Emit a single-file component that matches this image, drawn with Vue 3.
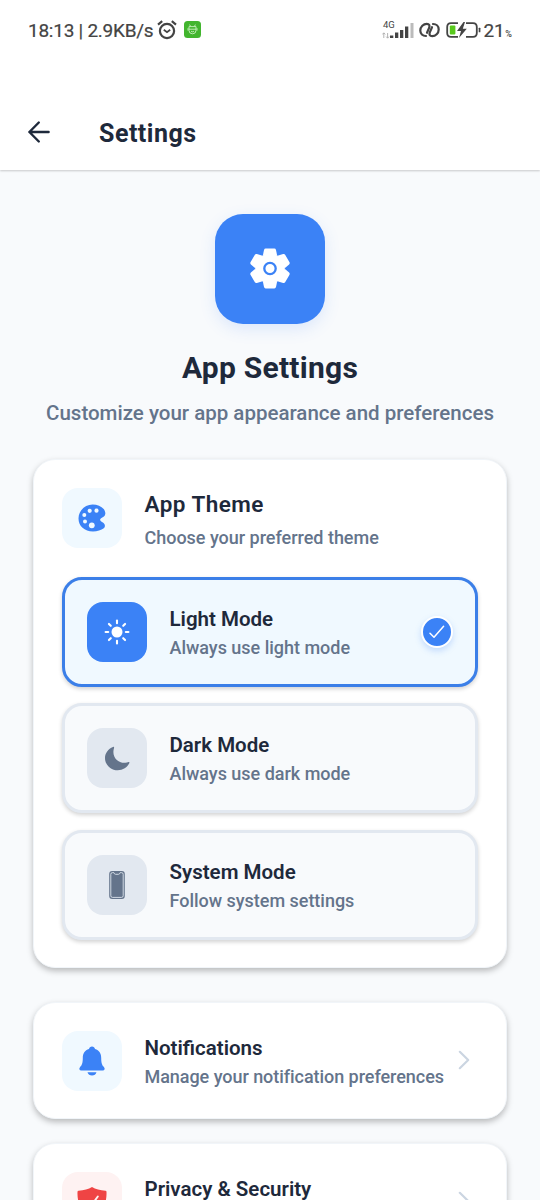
<script setup>
const modes = [
  { id: 'light', title: 'Light Mode', text: 'Always use light mode', active: true },
  { id: 'dark', title: 'Dark Mode', text: 'Always use dark mode', active: false },
  { id: 'system', title: 'System Mode', text: 'Follow system settings', active: false },
]
const rays = [0, 45, 90, 135, 180, 225, 270, 315]
const teeth = [0, 60, 120, 180, 240, 300]
const links = [
  { id: 'bell', title: 'Notifications', text: 'Manage your notification preferences' },
  { id: 'shield', title: 'Privacy & Security', text: '' },
]
</script>

<template>
  <div class="screen">
    <header class="top">
      <div class="status">
        <span class="clock">18:13 | 2.9KB/s</span>
        <svg class="alarm" width="20" height="20" viewBox="0 0 20 20" fill="none" stroke="#444" stroke-width="2.2">
          <circle cx="10" cy="11" r="7.1" />
          <path d="M1 4.6 5.2 1.2M19 4.6 14.8 1.2" />
          <path d="M6.8 9.8 10 12.2 13.2 9.8" stroke-width="1.8" />
        </svg>
        <svg class="robot" width="17" height="17" viewBox="0 0 17 17">
          <rect width="17" height="17" rx="3.5" fill="#42b52e" />
          <g fill="none" stroke="#c9f0bf" stroke-width=".9">
            <path d="M5.6 3.6 6.6 5.4M11.4 3.6 10.4 5.4M4 7.2V9.6M13 7.2V9.6" />
            <path d="M5 5.6H12V9.4Q12 12.8 8.5 12.8T5 9.4ZM5 8.2H12M7 10.2Q8.5 11.4 10 10.2" />
          </g>
        </svg>
        <div class="status-right">
          <svg class="signal" width="33" height="22" viewBox="0 0 33 22">
            <text x="1" y="8.6" class="net">4G</text>
            <path d="M1.8 19V14M.4 15.4 1.8 13.8 3.2 15.4M5.6 14V19M4.2 17.6 5.6 19.2 7 17.6" fill="none" stroke="#aaa" stroke-width=".9" />
            <path d="M8 16.500h3.300v2.500H8zM13 13.500h3.300V19H13zM18 11h3.300v8H18zM23 7.500h3.300V19H23z" fill="#444" />
            <path d="M28.500 4h3v15h-3z" fill="#bbb" />
          </svg>
          <svg class="link" width="21" height="16" viewBox="0 0 21 16" fill="none" stroke="#444" stroke-width="2.200" stroke-linecap="round">
            <path d="M7 14C3.600 14 1.300 11.800 1.300 8.600 1.300 4.700 4.500 1.800 7.800 1.800 10.400 1.800 11 3.600 10.100 5.800L8 10.800" />
            <path d="M14 2C17.400 2 19.700 4.200 19.700 7.400 19.700 11.300 16.500 14.200 13.200 14.200 10.600 14.200 10 12.400 10.900 10.200L13 5.200" />
          </svg>
          <svg class="battery" width="35" height="16" viewBox="0 0 35 16">
            <path d="M12 1.200H5Q1.200 1.200 1.200 5V11Q1.200 14.800 5 14.800H12M20 1.200H27Q30.800 1.200 30.800 5V11Q30.800 14.800 27 14.800H20" fill="none" stroke="#444" stroke-width="1.800" />
            <rect x="3.800" y="3.600" width="5.600" height="8.800" rx="1" fill="#58c91c" />
            <path d="M17.500 0 11 9H15L13 16 20.800 6.800H16.800L19 0Z" fill="#444" />
            <rect x="32.700" y="5.700" width="1.700" height="4.600" rx=".5" fill="#444" />
          </svg>
          <span class="level">21</span><span class="pct">%</span>
        </div>
      </div>
      <div class="bar">
        <svg width="24" height="24" viewBox="0 0 24 24" fill="none" stroke="#1e293b" stroke-width="2.400" stroke-linecap="round" stroke-linejoin="round">
          <path d="M11.800 2.500 2.400 12 11.800 21.500M2.400 12H21.600" />
        </svg>
        <h1>Settings</h1>
      </div>
    </header>

    <section class="hero">
      <div class="hero-icon">
        <svg width="44" height="44" viewBox="-22 -21.500 44 44">
          <g fill="#fff">
            <circle r="14.800" />
            <path v-for="a in teeth" :key="a" :transform="`rotate(${a})`" d="M-7.200-12.800-6-18.600Q-5.600-20-4.400-20H4.400Q5.600-20 6-18.600L7.200-12.800Z" />
          </g>
          <circle r="5.700" fill="#fff" stroke="#3b82f6" stroke-width="2.300" />
        </svg>
      </div>
      <h2>App Settings</h2>
      <p>Customize your app appearance and preferences</p>
    </section>

    <section class="card theme">
      <div class="row theme-head">
        <div class="tile">
          <svg width="30" height="30" viewBox="0 0 30 30">
            <path d="M15.600 1.500C7.600 1.500 1.500 8 1.500 15.500S7.500 28.400 16 28.400c4.200 0 8.300-1.200 10.800-3.200 1.200-1 1.400-2.500.7-4-.7-1.400-2.300-2-3.500-2.900-1.200-1-1.200-2.400.1-3.100 1.400-.7 3.800-1.500 4.200-4.100.2-1.600-.4-3.400-1.600-5C24.300 3.200 20.300 1.500 15.600 1.500Z" fill="#3b82f6" />
            <g fill="#f0f9ff">
              <circle cx="7.300" cy="12" r="2" /><circle cx="12.700" cy="7.800" r="2.100" /><circle cx="19.500" cy="7.700" r="2.100" />
              <circle cx="8" cy="18.500" r="2" /><circle cx="14.800" cy="22.300" r="2.900" />
            </g>
          </svg>
        </div>
        <div class="copy">
          <h3>App Theme</h3>
          <p>Choose your preferred theme</p>
        </div>
      </div>
      <div class="modes">
        <div v-for="m in modes" :key="m.id" class="mode" :class="{ active: m.active }">
          <div class="tile">
            <svg v-if="m.id === 'light'" width="26" height="26" viewBox="-13 -13 26 26">
              <circle r="5.500" fill="#fff" />
              <path v-for="a in rays" :key="a" :transform="`rotate(${a})`" d="M0-8.800V-11.400" stroke="#fff" stroke-width="2.100" stroke-linecap="round" />
            </svg>
            <svg v-else-if="m.id === 'dark'" width="26" height="26" viewBox="0 0 26 26">
              <path d="M9 2c.6-.5 1.300-.1 1.100.7-2.800 8.300 3 15.600 11.300 15.100 1.200-.1 2-.4 3.100-.7.8-.2 1.200.4.9 1C23.300 22.500 18.900 25.300 13.700 25.300 6.700 25.300 1 19.800 1 12.900 1 8.200 4.200 3.900 9 2Z" fill="#64748b" />
            </svg>
            <svg v-else width="28" height="28" viewBox="0 0 28 28">
              <rect x="6.200" y="0" width="15.600" height="28" rx="3" fill="#64748b" />
              <path d="M9.500 1.600H10.800Q11.300 3.300 12.600 3.300H15.400Q16.700 3.300 17.200 1.600H18.500Q20.200 1.600 20.200 3.300V24.700Q20.200 26.400 18.500 26.400H9.500Q7.800 26.400 7.800 24.700V3.300Q7.800 1.600 9.500 1.600Z" fill="none" stroke="#dce4ed" stroke-width=".9" />
            </svg>
          </div>
          <div class="copy">
            <h4>{{ m.title }}</h4>
            <p>{{ m.text }}</p>
          </div>
          <div v-if="m.active" class="check">
            <svg width="18" height="16" viewBox="0 0 18 16" fill="none" stroke="#fff" stroke-width="1.500" stroke-linecap="round" stroke-linejoin="round">
              <path d="M2 9.200 6 13.200 15.600 2.200" />
            </svg>
          </div>
        </div>
      </div>
    </section>

    <section v-for="l in links" :key="l.id" class="card row item">
      <div class="tile" :class="{ red: l.id === 'shield' }">
        <svg v-if="l.id === 'bell'" width="30" height="30" viewBox="0 0 30 30" fill="#3b82f6">
          <path d="M15 .6c-1.600 0-2.700 1.100-3 2.300C7.800 4 5.800 7.600 5.800 11.700c0 5.700-1 7.500-2.700 9.300-1.400 1.500-.9 3.600 1.200 3.600H25.700c2.100 0 2.600-2.100 1.200-3.600-1.700-1.800-2.700-3.600-2.700-9.300C24.200 7.600 22.200 4 18 2.900 17.700 1.700 16.600.6 15 .6Z" />
          <path d="M10.500 26.300H19.500Q18.400 29.500 15 29.500T10.500 26.300Z" />
        </svg>
        <svg v-else width="30" height="30" viewBox="0 0 30 30">
          <path d="M15 0C11.500 2.200 7 3.400 1.500 3.700Q.5 3.800.5 5C0 17 5 26 15 30 25 26 30 17 29.500 5Q29.500 3.800 28.500 3.700C23 3.400 18.500 2.200 15 0Z" fill="#ef4444" />
          <path d="M9.500 16 13.200 20 20.800 9.500" fill="none" stroke="#fef2f2" stroke-width="1.900" stroke-linecap="round" stroke-linejoin="round" />
        </svg>
      </div>
      <div class="copy">
        <h4>{{ l.title }}</h4>
        <p>{{ l.text }}</p>
      </div>
      <svg class="chev" width="12" height="20" viewBox="0 0 12 20" fill="none" stroke="#cbd5e1" stroke-width="2.200" stroke-linecap="round" stroke-linejoin="round">
        <path d="M1.800 1.800 10.200 10 1.800 18.200" />
      </svg>
    </section>
  </div>
</template>

<style>
body { margin: 0; overflow: hidden; }
</style>

<style scoped>
.screen { width: 540px; height: 1200px; overflow: hidden; background: #f8fafc; font-family: Roboto, "Liberation Sans", sans-serif; color: #1e293b; }
h1, h2, h3, h4, p { margin: 0; white-space: nowrap; }
svg { display: block; flex: none; }
.top { height: 170px; background: #fff; box-shadow: 0 1px 2px rgba(0, 0, 0, .2); }
.status { height: 60px; display: flex; align-items: center; padding: 1px 28px 0 28px; box-sizing: border-box; color: #444; }
.clock { font-size: 19px; letter-spacing: -.25px; width: 126px; white-space: nowrap; -webkit-text-stroke: .2px #444; }
.alarm { margin-left: 3px; margin-top: -2px; }
.robot { margin-left: 7px; margin-top: -2px; }
.status-right { margin-left: auto; display: flex; align-items: center; }
.net { font: 9.500px Roboto, sans-serif; fill: #444; }
.signal { margin-top: -1px; }
.link { margin-left: 4px; margin-top: -1px; }
.battery { margin-left: 6px; margin-top: -1px; }
.level { font-size: 19px; margin-left: 3px; letter-spacing: -.3px; -webkit-text-stroke: .2px #444; }
.pct { font-size: 9px; font-weight: 500; margin-top: 6px; margin-left: 1px; }
.bar { height: 110px; display: flex; align-items: center; padding: 37px 27px 0; box-sizing: border-box; }
.bar svg { margin-top: -4px; }
h1 { margin-left: 48px; font-size: 25px; line-height: 30px; font-weight: 700; letter-spacing: .5px; }
.hero { display: flex; flex-direction: column; align-items: center; padding-top: 44px; }
.hero-icon { width: 110px; height: 110px; border-radius: 28px; background: #3b82f6; display: flex; align-items: center; justify-content: center; box-shadow: 0 5px 16px rgba(59, 130, 246, .15); }
h2 { margin-top: 25px; font-size: 30px; line-height: 38px; font-weight: 700; letter-spacing: .25px; }
.hero p { margin-top: 12px; font-size: 20.500px; line-height: 28px; font-weight: 500; color: #64748b; }
.card { margin: 0 33px; background: #fff; border-radius: 22px; border: 1px solid #f1f5f9; box-sizing: border-box; box-shadow: 0 3px 6px rgba(0, 0, 0, .26); }
.theme { margin-top: 32px; height: 509px; padding: 28px; }
.row { display: flex; align-items: center; }
.tile { width: 60px; height: 60px; border-radius: 16px; background: #f0f9ff; flex: none; display: flex; align-items: center; justify-content: center; }
.tile.red { background: #fef2f2; }
.copy { margin-left: 22.500px; flex: 1; min-width: 0; }
.theme-head { height: 60px; }
h3 { font-size: 22.500px; line-height: 32px; font-weight: 600; letter-spacing: .45px; margin-top: 1px; }
.theme-head .copy p { margin-top: 5px; padding-top: 1px; }
.copy p { font-size: 18px; line-height: 24px; height: 24px; color: #64748b; font-weight: 500; letter-spacing: -.02px; }
h4 { font-size: 20.500px; line-height: 28px; font-weight: 600; margin-top: 1px; }
.copy h4 + p { margin-top: 2px; padding-top: 1px; }
.item .copy p { letter-spacing: -.05px; }
.modes { margin-top: 28.500px; display: flex; flex-direction: column; gap: 16.500px; }
.mode { height: 110px; box-sizing: border-box; border: 3px solid #e2e8f0; border-radius: 20px; background: #f8fafc; display: flex; align-items: center; padding: 0 22px; box-shadow: 0 2px 4px rgba(0, 0, 0, .18); }
.mode .tile { background: #e2e8f0; }
.mode.active { border-color: #3b7fe8; background: #f0f9ff; }
.mode.active .tile { background: #3b82f6; }
.check { width: 32px; height: 32px; box-sizing: border-box; border: 2px solid #fff; border-radius: 50%; background: #3b82f6; display: flex; align-items: center; justify-content: center; box-shadow: 0 3px 6px rgba(59, 130, 246, .25); }
.item { height: 117px; margin-top: 34px; padding: 0 28px; }
.item + .item { margin-top: 24px; }
.chev { margin-right: 8px; margin-top: -1px; }
</style>
